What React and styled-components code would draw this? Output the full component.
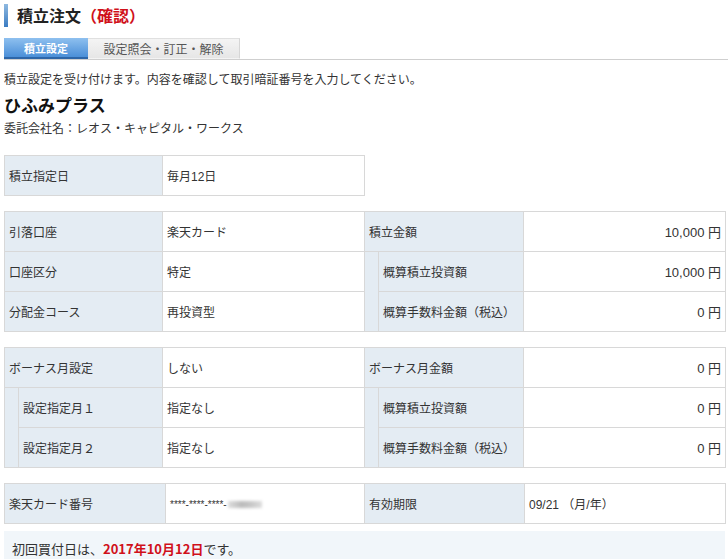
import styled, { createGlobalStyle } from "styled-components";

const GlobalStyle = createGlobalStyle`
  body {
    margin: 0;
    background: #fff;
    font-family: "Noto Sans CJK JP", "Noto Sans", sans-serif;
    color: #333;
  }
`;

const Page = styled.div`
  width: 728px;
  display: flex;
  flex-direction: column;
  padding: 3px 3px 0 4px;
  box-sizing: border-box;
`;

const Title = styled.h1`
  margin: 0;
  height: 24px;
  display: flex;
  align-items: center;
  gap: 9px;
  font-size: 16px;
  font-weight: 700;
  color: #222;
  &::before {
    content: "";
    width: 4px;
    height: 23px;
    background: linear-gradient(#8fb9e0, #3b7cc2);
  }
  em {
    font-style: normal;
    color: #d0101a;
  }
`;

const Tabs = styled.div`
  margin-top: 11px;
  display: flex;
  border-bottom: 1px solid #cfcfcf;
  margin-right: -3px;
`;

const Tab = styled.div`
  height: 21px;
  display: flex;
  align-items: center;
  justify-content: center;
  font-size: ${(p) => (p.$active ? "11px" : "12px")};
  font-weight: ${(p) => (p.$active ? 700 : 400)};
  color: ${(p) => (p.$active ? "#fff" : "#555")};
  width: ${(p) => p.$width}px;
  box-sizing: border-box;
  background: ${(p) =>
    p.$active
      ? "linear-gradient(#8ec0ef, #4b8fd8)"
      : "linear-gradient(#f4f4f4, #e6e6e6)"};
  border-bottom: ${(p) => (p.$active ? "2px solid #2d66a8" : "1px solid transparent")};
  border-right: ${(p) => (p.$active ? "none" : "1px solid #d6d6d6")};
  border-top: ${(p) => (p.$active ? "none" : "1px solid #e0e0e0")};
`;

const Intro = styled.p`
  margin: 10px 0 0;
  font-size: 12px;
  line-height: 18px;
`;

const Product = styled.h2`
  margin: 5px 0 0;
  font-size: 17px;
  line-height: 24px;
  font-weight: 700;
  color: #111;
`;

const Company = styled.p`
  margin: 2px 0 0;
  font-size: 12px;
  line-height: 18px;
`;

const Table = styled.table`
  border-collapse: collapse;
  table-layout: fixed;
  width: ${(p) => p.$width}px;
  margin-top: ${(p) => p.$top}px;
  font-size: 12px;
  font-family: "Liberation Sans", "Noto Sans CJK JP", sans-serif;
  td {
    height: 40px;
    padding: 0 4px;
    border: 1px solid #d8d8d8;
    box-sizing: border-box;
    white-space: nowrap;
  }
`;

const Label = styled.td`
  background: #e4ecf3;
  color: #333;
`;

const Value = styled.td`
  background: #fff;
  text-align: ${(p) => (p.$right ? "right" : "left")};
  font-size: ${(p) => (p.$right ? "13px" : "12px")};
`;

const Indent = styled.td`
  background: #e4ecf3;
  && {
    padding: 0;
    border-top: none;
    border-bottom: 1px solid #d8d8d8;
  }
`;

const Masked = styled.span`
  font-size: 10px;
  vertical-align: middle;
`;

const Blur = styled.span`
  display: inline-block;
  width: 34px;
  height: 7px;
  margin-left: 1px;
  vertical-align: middle;
  background: linear-gradient(90deg, #ddd, #bbb 40%, #c8c8c8 70%, #ddd);
  filter: blur(1.5px);
`;

const Note = styled.div`
  margin-top: 7px;
  background: #f1f6fa;
  padding: 9px 8px 10px;
  font-size: 13px;
  line-height: 18px;
  strong {
    color: #d0101a;
    font-weight: 700;
  }
`;

const Cols = ({ widths }) => (
  <colgroup>
    {widths.map((w, i) => (
      <col key={i} style={{ width: w }} />
    ))}
  </colgroup>
);

const App = () => {
  return (
    <>
      <GlobalStyle />
      <Page>
        <Title>
          <span>
            積立注文<em>（確認）</em>
          </span>
        </Title>
        <Tabs>
          <Tab $active $width={84}>積立設定</Tab>
          <Tab $width={152}>設定照会・訂正・解除</Tab>
        </Tabs>
        <Intro>積立設定を受け付けます。内容を確認して取引暗証番号を入力してください。</Intro>
        <Product>ひふみプラス</Product>
        <Company>委託会社名：レオス・キャピタル・ワークス</Company>

        <Table $width={360} $top={18}>
          <Cols widths={[158, 202]} />
          <tbody>
            <tr>
              <Label>積立指定日</Label>
              <Value>毎月12日</Value>
            </tr>
          </tbody>
        </Table>

        <Table $width={721} $top={15}>
          <Cols widths={[158, 202, 14, 145, 202]} />
          <tbody>
            <tr>
              <Label>引落口座</Label>
              <Value>楽天カード</Value>
              <Label colSpan={2}>積立金額</Label>
              <Value $right>10,000 円</Value>
            </tr>
            <tr>
              <Label>口座区分</Label>
              <Value>特定</Value>
              <Indent rowSpan={2} />
              <Label>概算積立投資額</Label>
              <Value $right>10,000 円</Value>
            </tr>
            <tr>
              <Label>分配金コース</Label>
              <Value>再投資型</Value>
              <Label>概算手数料金額（税込）</Label>
              <Value $right>0 円</Value>
            </tr>
          </tbody>
        </Table>

        <Table $width={721} $top={15}>
          <Cols widths={[14, 144, 202, 14, 145, 202]} />
          <tbody>
            <tr>
              <Label colSpan={2}>ボーナス月設定</Label>
              <Value>しない</Value>
              <Label colSpan={2}>ボーナス月金額</Label>
              <Value $right>0 円</Value>
            </tr>
            <tr>
              <Indent rowSpan={2} />
              <Label>設定指定月１</Label>
              <Value>指定なし</Value>
              <Indent rowSpan={2} />
              <Label>概算積立投資額</Label>
              <Value $right>0 円</Value>
            </tr>
            <tr>
              <Label>設定指定月２</Label>
              <Value>指定なし</Value>
              <Label>概算手数料金額（税込）</Label>
              <Value $right>0 円</Value>
            </tr>
          </tbody>
        </Table>

        <Table $width={721} $top={15}>
          <Cols widths={[161, 199, 160, 201]} />
          <tbody>
            <tr>
              <Label>楽天カード番号</Label>
              <Value>
                <Masked>****-****-****-</Masked>
                <Blur />
              </Value>
              <Label>有効期限</Label>
              <Value>09/21 （月/年）</Value>
            </tr>
          </tbody>
        </Table>

        <Note>
          初回買付日は、<strong>2017年10月12日</strong>です。
        </Note>
      </Page>
    </>
  );
};

export default App;
